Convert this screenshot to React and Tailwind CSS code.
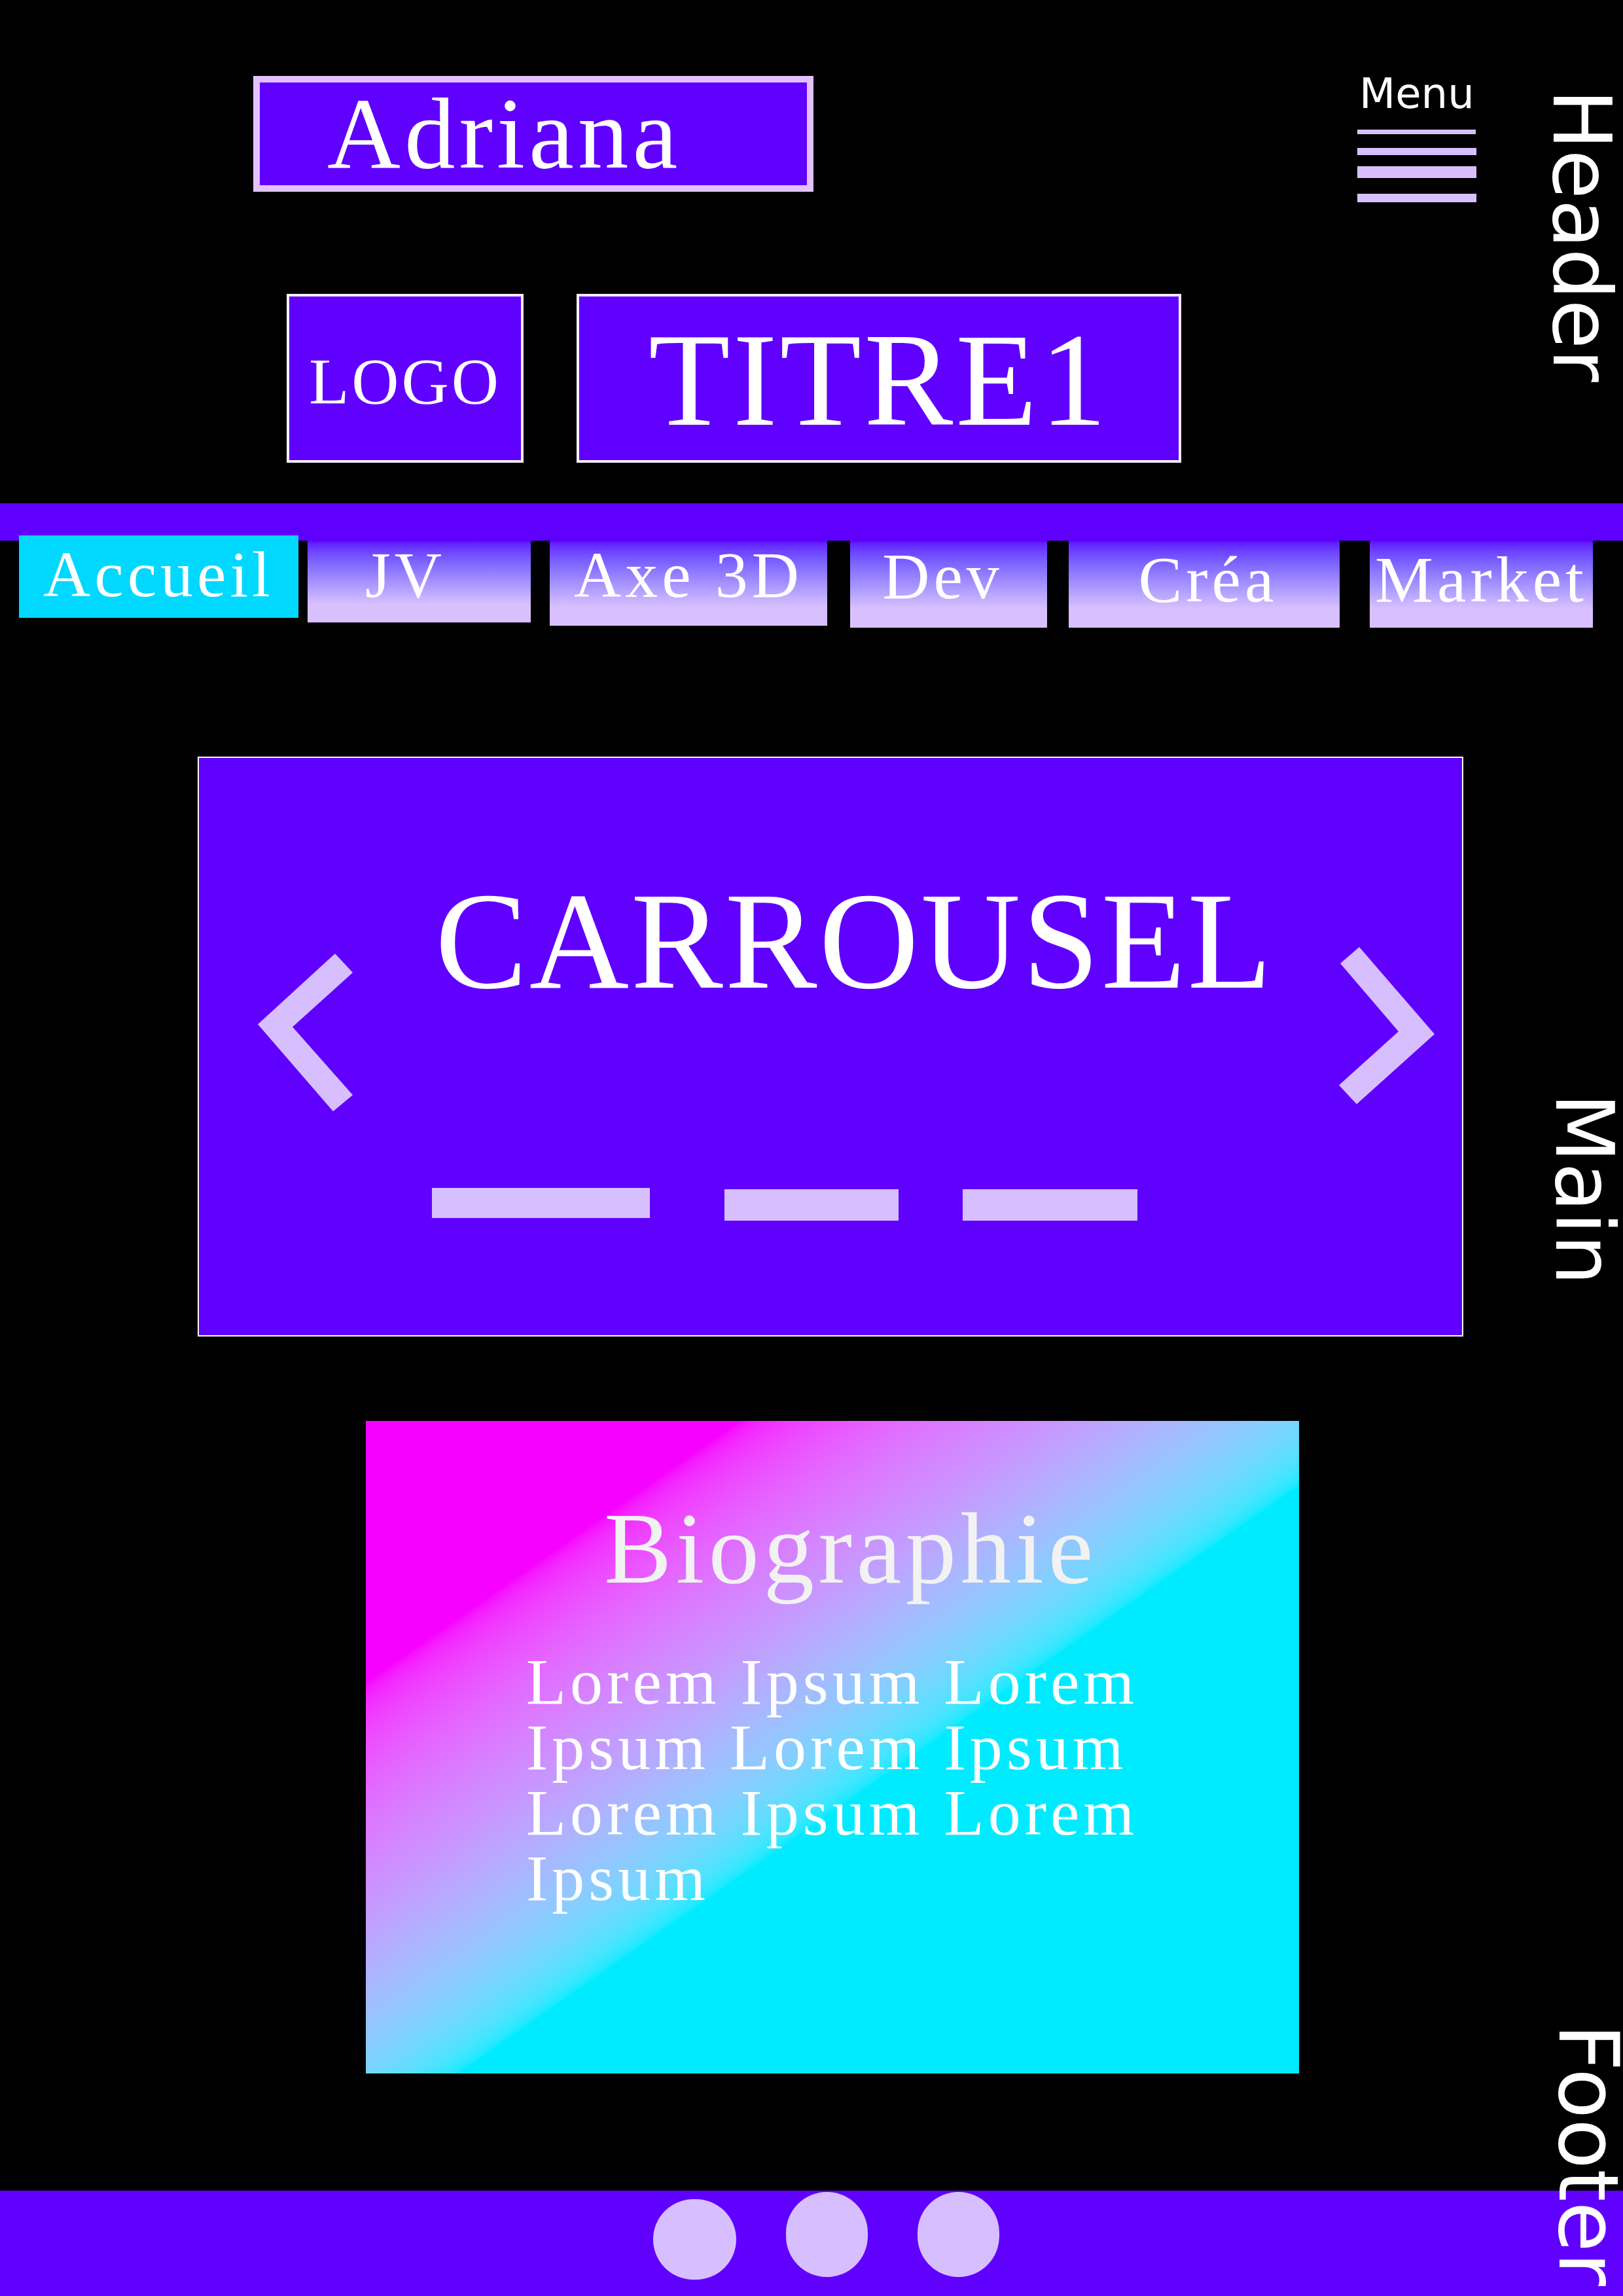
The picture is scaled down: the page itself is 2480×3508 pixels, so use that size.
const serif = "font-['Liberation_Serif',serif]";
const sans = "font-['DejaVu_Sans',sans-serif]";

const tabs = [
  { label: "JV", cls: "ml-[14px] w-[341px] h-[125px] pt-[3px] pr-[42px]" },
  { label: "Axe 3D", cls: "ml-[29px] w-[424px] h-[130px] pt-[3px]" },
  { label: "Dev", cls: "ml-[35px] w-[301px] h-[133px] pt-[5px] pr-[18px]" },
  { label: "Créa", cls: "ml-[33px] w-[414px] h-[133px] pt-[10px] pl-[12px]" },
  { label: "Market", cls: "ml-[46px] w-[341px] h-[133px] pt-[10px]" },
];

function Chevron({ points, className, w, h }) {
  return (
    <svg className={className} width={w} height={h} viewBox={`0 0 ${w} ${h}`}>
      <polygon points={points} fill="#d7bfff" />
    </svg>
  );
}

export default function App() {
  return (
    <div className="relative w-[2480px] h-[3508px] overflow-hidden bg-black">
      {/* Header */}
      <header className="h-[769px] pt-[111px]">
        <div className="flex h-[338px] items-start">
          <div className={`ml-[387px] mt-[5px] h-[177px] w-[856px] border-[10px] border-[#e3c1ff] bg-[#6000ff] pl-[103px] pt-[1px] text-[155px] leading-none tracking-[6px] text-white ${serif}`}>
            Adriana
          </div>
          <div className="ml-[831px] flex w-[182px] flex-col">
            <span className={`pl-[3px] text-[64px] leading-none text-white ${sans}`}>Menu</span>
            <div className="mt-[23px] h-[7px] w-[181px] bg-[#d7bfff]" />
            <div className="mt-[21px] h-[11px] w-[182px] bg-[#d7bfff]" />
            <div className="mt-[17px] h-[18px] w-[182px] bg-[#d7bfff]" />
            <div className="mt-[24px] h-[13px] w-[182px] bg-[#d7bfff]" />
          </div>
        </div>
        <div className="flex h-[258px]">
          <div className={`ml-[438px] w-[362px] border-4 border-[#f5efff] bg-[#6000ff] pt-[80px] text-center text-[100px] leading-none tracking-[4px] text-white ${serif}`}>
            LOGO
          </div>
          <div className={`ml-[81px] w-[924px] border-4 border-[#f5efff] bg-[#6000ff] pt-[25px] text-center text-[204px] leading-none tracking-[4px] text-white ${serif}`}>
            TITRE1
          </div>
        </div>
      </header>

      {/* Nav */}
      <nav>
        <div className="h-[57px] bg-[#5f00ff]" />
        <div className={`flex h-[133px] items-start text-[100px] leading-none tracking-[6px] text-white ${serif}`}>
          <div className="-mt-[8px] ml-[29px] h-[126px] w-[427px] bg-[#00d8ff] pt-[10px] text-center">Accueil</div>
          {tabs.map((t) => (
            <div key={t.label} className={`bg-linear-to-b from-[#5f00ff] to-[#d8c0ff] to-78% text-center ${t.cls}`}>
              {t.label}
            </div>
          ))}
        </div>
      </nav>

      {/* Main */}
      <main className="pt-[197px]">
        <section className="relative ml-[302px] h-[886px] w-[1934px] border-2 border-white bg-[#6000ff]">
          <div className={`pl-[361px] pt-[175px] text-[211px] leading-none tracking-[3px] text-white ${serif}`}>CARROUSEL</div>
          <div className="mt-[271px] flex items-start pl-[356px]">
            <div className="h-[46px] w-[333px] bg-[#d7bfff]" />
            <div className="ml-[114px] mt-[2px] h-[48px] w-[266px] bg-[#d7bfff]" />
            <div className="ml-[98px] mt-[2px] h-[48px] w-[267px] bg-[#d7bfff]" />
          </div>
          <Chevron className="absolute left-[90px] top-[299px]" w={145} h={241} points="118,0 145,29 53,112 145,216 115,241 0,108" />
          <Chevron className="absolute left-[1742px] top-[289px]" w={146} h={240} points="31,0 2,25 91,129 0,211 27,240 146,133" />
        </section>

        <section className="ml-[559px] mt-[129px] h-[997px] w-[1426px] bg-linear-to-br from-[#f600ff] from-20% via-[#c896ff] via-37% to-[#00ebff] to-55%">
          <h2 className={`pl-[364px] pt-[118px] text-[155px] font-normal leading-none tracking-[6.5px] text-[#f2f2f2] ${serif}`}>Biographie</h2>
          <p className={`mt-[76px] w-[1245px] pl-[245px] text-[100px] leading-[100px] tracking-[6px] text-white ${serif}`}>
            Lorem Ipsum Lorem Ipsum Lorem Ipsum Lorem Ipsum Lorem Ipsum
          </p>
        </section>
      </main>

      {/* Footer */}
      <footer className="mt-[179px] flex h-[161px] items-start bg-[#6000ff]">
        <div className="ml-[998px] mt-[13px] h-[123px] w-[127px] rounded-full bg-[#d7bfff]" />
        <div className="ml-[76px] mt-[2px] h-[130px] w-[125px] rounded-full bg-[#d7bfff]" />
        <div className="ml-[76px] mt-[2px] h-[130px] w-[125px] rounded-full bg-[#d7bfff]" />
      </footer>

      {/* Section labels */}
      <span className={`absolute left-[2355px] top-[136px] text-[123px] leading-none text-white [writing-mode:vertical-rl] ${sans}`}>Header</span>
      <span className={`absolute left-[2359px] top-[1670px] text-[123px] leading-none text-white [writing-mode:vertical-rl] ${sans}`}>Main</span>
      <span className={`absolute left-[2363px] top-[3092px] text-[126px] leading-none text-white [writing-mode:vertical-rl] ${sans}`}>Footer</span>
    </div>
  );
}
